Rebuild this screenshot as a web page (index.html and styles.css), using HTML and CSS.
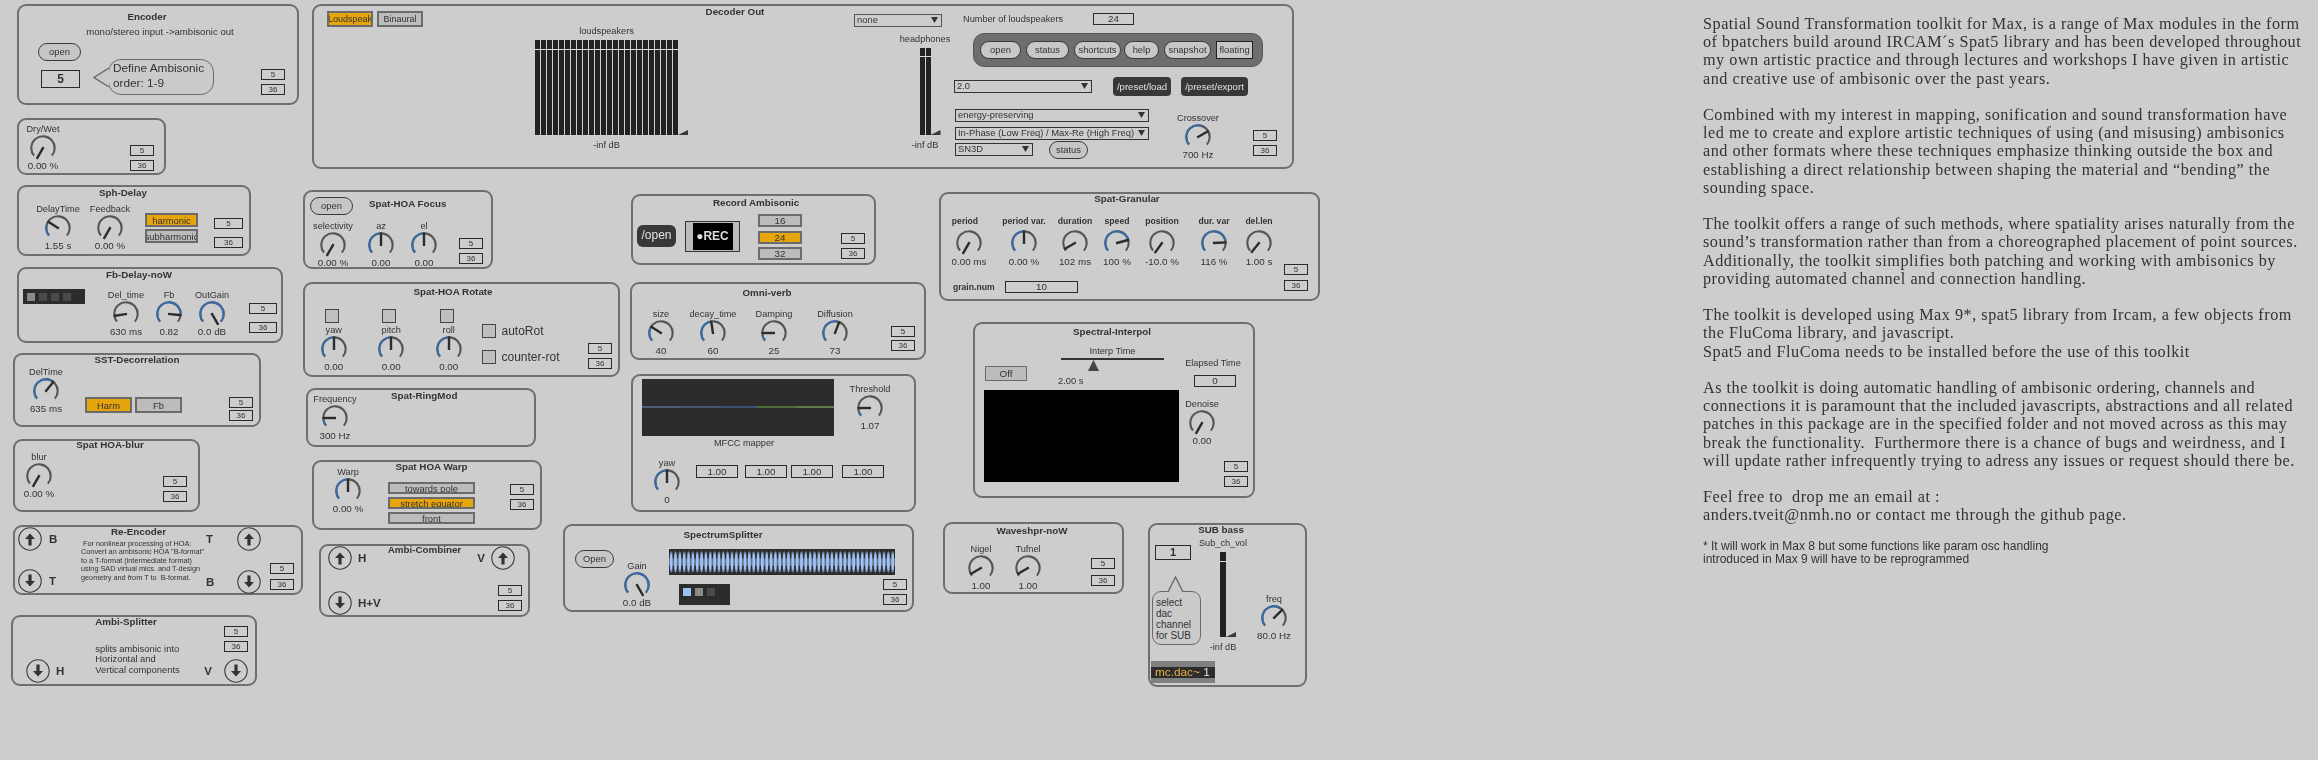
FILE: index.html
```html
<!DOCTYPE html>
<html lang="en">
<head>
    <meta charset="UTF-8">
    <title>Spatial Sound Transformation toolkit</title>
    <link rel="stylesheet" href="styles.css">
</head>
<body>
    <svg class="defs" width="0" height="0">
        <defs>
            <g id="dial">
                <circle class="track" r="11.7" pathLength="360"/>
                <circle class="fill" r="11.7" pathLength="360"/>
                <line class="needle" y1="1" y2="-12.5"/>
            </g>
            <g id="arrow">
                <circle class="ring" r="11.2"/>
                <path class="head" d="M0 -5.5L5 0L1.6 0L1.6 6.5L-1.6 6.5L-1.6 0L-5 0Z"/>
            </g>
        </defs>
    </svg>

    <main class="page">
        <div class="patcher">

            <section class="mod encoder">
                <h3 class="title">Encoder</h3>
                <p class="sub">mono/stereo input -&gt;ambisonic out</p>
                <div class="body">
                    <div class="left">
                        <div class="pill">open</div>
                        <div class="num big">5</div>
                    </div>
                    <div class="callout">Define Ambisonic<br>order: 1-9
                        <svg class="tail" viewBox="0 0 16 19"><path d="M16 0L1 9.5L16 19"/></svg>
                    </div>
                    <div class="chans"><span>5</span><span>36</span></div>
                </div>
            </section>

            <section class="mod drywet">
                <div class="body">
                    <div class="kc"><span class="lbl">Dry/Wet</span><svg class="knob" viewBox="-13 -13 26 26" style="--v:0"><use href="#dial"/></svg><span class="val">0.00 %</span></div>
                    <div class="chans"><span>5</span><span>36</span></div>
                </div>
            </section>

            <section class="mod sphdelay">
                <h3 class="title">Sph-Delay</h3>
                <div class="body">
                    <div class="knobs">
                        <div class="kc"><span class="lbl">DelayTime</span><svg class="knob" viewBox="-13 -13 26 26" style="--v:.31;--b:.2"><use href="#dial"/></svg><span class="val">1.55 s</span></div>
                        <div class="kc"><span class="lbl">Feedback</span><svg class="knob" viewBox="-13 -13 26 26" style="--v:0"><use href="#dial"/></svg><span class="val">0.00 %</span></div>
                    </div>
                    <div class="stack">
                        <div class="tb on">harmonic</div>
                        <div class="tb">subharmonic</div>
                    </div>
                    <div class="chans"><span>5</span><span>36</span></div>
                </div>
            </section>

            <section class="mod fbdelay">
                <h3 class="title">Fb-Delay-noW</h3>
                <div class="body">
                    <div class="tabs"><i class="lit"></i><i></i><i></i><i></i></div>
                    <div class="knobs">
                        <div class="kc"><span class="lbl">Del_time</span><svg class="knob" viewBox="-13 -13 26 26" style="--v:.17;--b:0"><use href="#dial"/></svg><span class="val">630 ms</span></div>
                        <div class="kc"><span class="lbl">Fb</span><svg class="knob" viewBox="-13 -13 26 26" style="--v:.82;--b:.85"><use href="#dial"/></svg><span class="val">0.82</span></div>
                        <div class="kc"><span class="lbl">OutGain</span><svg class="knob" viewBox="-13 -13 26 26" style="--v:1"><use href="#dial"/></svg><span class="val">0.0 dB</span></div>
                    </div>
                    <div class="chans"><span>5</span><span>36</span></div>
                </div>
            </section>

            <section class="mod decorr">
                <h3 class="title">SST-Decorrelation</h3>
                <div class="body">
                    <div class="kc"><span class="lbl">DelTime</span><svg class="knob" viewBox="-13 -13 26 26" style="--v:.63;--b:.6"><use href="#dial"/></svg><span class="val">635 ms</span></div>
                    <div class="pair">
                        <div class="tb on">Harm</div>
                        <div class="tb">Fb</div>
                    </div>
                    <div class="chans"><span>5</span><span>36</span></div>
                </div>
            </section>

            <section class="mod blur">
                <h3 class="title">Spat HOA-blur</h3>
                <div class="body">
                    <div class="kc"><span class="lbl">blur</span><svg class="knob" viewBox="-13 -13 26 26" style="--v:0"><use href="#dial"/></svg><span class="val">0.00 %</span></div>
                    <div class="chans"><span>5</span><span>36</span></div>
                </div>
            </section>

            <section class="mod reenc">
                <div class="body">
                    <div class="arrows">
                        <div class="arow"><svg class="arrow" viewBox="-12 -12 24 24"><use href="#arrow"/></svg><b>B</b></div>
                        <div class="arow"><svg class="arrow down" viewBox="-12 -12 24 24"><use href="#arrow"/></svg><b>T</b></div>
                    </div>
                    <div class="mid">
                        <h3 class="title">Re-Encoder</h3>
                        <p class="tiny">&nbsp;For nonlinear processing of HOA:<br>Convert an ambisonic HOA "B-format"<br>to a T-format (intermediate format)<br>using SAD virtual mics. and T-design<br>geometry and from T to&nbsp; B-format.</p>
                    </div>
                    <div class="arrows right">
                        <div class="arow"><b>T</b><svg class="arrow" viewBox="-12 -12 24 24"><use href="#arrow"/></svg></div>
                        <div class="arow"><b>B</b><svg class="arrow down" viewBox="-12 -12 24 24"><use href="#arrow"/></svg></div>
                    </div>
                    <div class="chans"><span>5</span><span>36</span></div>
                </div>
            </section>

            <section class="mod splitter">
                <h3 class="title">Ambi-Splitter</h3>
                <div class="body">
                    <div class="arow low"><svg class="arrow down" viewBox="-12 -12 24 24"><use href="#arrow"/></svg><b>H</b></div>
                    <p class="txt">splits ambisonic into<br>Horizontal and<br>Vertical components</p>
                    <div class="endcol">
                        <div class="chans"><span>5</span><span>36</span></div>
                        <div class="arow"><b>V</b><svg class="arrow down" viewBox="-12 -12 24 24"><use href="#arrow"/></svg></div>
                    </div>
                </div>
            </section>

            <section class="mod focus">
                <div class="head-row">
                    <div class="pill">open</div>
                    <h3 class="title">Spat-HOA Focus</h3>
                </div>
                <div class="body">
                    <div class="knobs">
                        <div class="kc"><span class="lbl">selectivity</span><svg class="knob" viewBox="-13 -13 26 26" style="--v:0"><use href="#dial"/></svg><span class="val">0.00 %</span></div>
                        <div class="kc"><span class="lbl">az</span><svg class="knob" viewBox="-13 -13 26 26" style="--v:.5"><use href="#dial"/></svg><span class="val">0.00</span></div>
                        <div class="kc"><span class="lbl">el</span><svg class="knob" viewBox="-13 -13 26 26" style="--v:.5"><use href="#dial"/></svg><span class="val">0.00</span></div>
                    </div>
                    <div class="chans"><span>5</span><span>36</span></div>
                </div>
            </section>

            <section class="mod rotate">
                <h3 class="title">Spat-HOA Rotate</h3>
                <div class="body">
                    <div class="knobs">
                        <div class="kc"><i class="check"></i><span class="lbl">yaw</span><svg class="knob" viewBox="-13 -13 26 26" style="--v:.5"><use href="#dial"/></svg><span class="val">0.00</span></div>
                        <div class="kc"><i class="check"></i><span class="lbl">pitch</span><svg class="knob" viewBox="-13 -13 26 26" style="--v:.5"><use href="#dial"/></svg><span class="val">0.00</span></div>
                        <div class="kc"><i class="check"></i><span class="lbl">roll</span><svg class="knob" viewBox="-13 -13 26 26" style="--v:.5"><use href="#dial"/></svg><span class="val">0.00</span></div>
                    </div>
                    <div class="toggles">
                        <div class="toggle"><i class="check"></i>autoRot</div>
                        <div class="toggle"><i class="check"></i>counter-rot</div>
                    </div>
                    <div class="chans"><span>5</span><span>36</span></div>
                </div>
            </section>

            <section class="mod ringmod">
                <div class="body">
                    <div class="kc"><span class="lbl">Frequency</span><svg class="knob" viewBox="-13 -13 26 26" style="--v:.2;--b:.12"><use href="#dial"/></svg><span class="val">300 Hz</span></div>
                    <h3 class="title">Spat-RingMod</h3>
                </div>
            </section>

            <section class="mod warp">
                <div class="body">
                    <div class="kc"><span class="lbl">Warp</span><svg class="knob" viewBox="-13 -13 26 26" style="--v:.5"><use href="#dial"/></svg><span class="val">0.00 %</span></div>
                    <div class="mid">
                        <h3 class="title">Spat HOA Warp</h3>
                        <div class="stack">
                            <div class="tb">towards pole</div>
                            <div class="tb on">stretch equator</div>
                            <div class="tb">front</div>
                        </div>
                    </div>
                    <div class="chans"><span>5</span><span>36</span></div>
                </div>
            </section>

            <section class="mod combiner">
                <div class="body">
                    <div class="arrows">
                        <div class="arow"><svg class="arrow" viewBox="-12 -12 24 24"><use href="#arrow"/></svg><b>H</b></div>
                        <div class="arow"><svg class="arrow down" viewBox="-12 -12 24 24"><use href="#arrow"/></svg><b>H+V</b></div>
                    </div>
                    <h3 class="title">Ambi-Combiner</h3>
                    <div class="endcol">
                        <div class="arow"><b>V</b><svg class="arrow" viewBox="-12 -12 24 24"><use href="#arrow"/></svg></div>
                        <div class="chans"><span>5</span><span>36</span></div>
                    </div>
                </div>
            </section>

            <section class="mod record">
                <h3 class="title">Record Ambisonic</h3>
                <div class="body">
                    <div class="dark">/open</div>
                    <div class="rec"><span>●REC</span></div>
                    <div class="stack">
                        <div class="tb">16</div>
                        <div class="tb on">24</div>
                        <div class="tb">32</div>
                    </div>
                    <div class="chans"><span>5</span><span>36</span></div>
                </div>
            </section>

            <section class="mod omni">
                <h3 class="title">Omni-verb</h3>
                <div class="body">
                    <div class="knobs">
                        <div class="kc"><span class="lbl">size</span><svg class="knob" viewBox="-13 -13 26 26" style="--v:.31;--b:.25"><use href="#dial"/></svg><span class="val">40</span></div>
                        <div class="kc"><span class="lbl">decay_time</span><svg class="knob" viewBox="-13 -13 26 26" style="--v:.47;--b:.45"><use href="#dial"/></svg><span class="val">60</span></div>
                        <div class="kc"><span class="lbl">Damping</span><svg class="knob" viewBox="-13 -13 26 26" style="--v:.2;--b:.12"><use href="#dial"/></svg><span class="val">25</span></div>
                        <div class="kc"><span class="lbl">Diffusion</span><svg class="knob" viewBox="-13 -13 26 26" style="--v:.57;--b:.55"><use href="#dial"/></svg><span class="val">73</span></div>
                    </div>
                    <div class="chans"><span>5</span><span>36</span></div>
                </div>
            </section>

            <section class="mod mfcc">
                <div class="mfcc-top">
                    <div class="mfcc-view">
                        <div class="scope"></div>
                        <span class="lbl">MFCC mapper</span>
                    </div>
                    <div class="kc"><span class="lbl">Threshold</span><svg class="knob" viewBox="-13 -13 26 26" style="--v:.2;--b:.1"><use href="#dial"/></svg><span class="val">1.07</span></div>
                </div>
                <div class="mfcc-low">
                    <div class="kc"><span class="lbl">yaw</span><svg class="knob" viewBox="-13 -13 26 26" style="--v:.5"><use href="#dial"/></svg><span class="val">0</span></div>
                    <div class="num">1.00</div>
                    <div class="num">1.00</div>
                    <div class="num">1.00</div>
                    <div class="num">1.00</div>
                </div>
            </section>

            <section class="mod splitter2">
                <h3 class="title">SpectrumSplitter</h3>
                <div class="body">
                    <div class="pill">Open</div>
                    <div class="kc"><span class="lbl">Gain</span><svg class="knob" viewBox="-13 -13 26 26" style="--v:1"><use href="#dial"/></svg><span class="val">0.0 dB</span></div>
                    <div class="spec-col">
                        <div class="spectrum"></div>
                        <div class="spec-low">
                            <div class="tabs"><i class="blue"></i><i class="lit"></i><i></i></div>
                            <div class="chans"><span>5</span><span>36</span></div>
                        </div>
                    </div>
                </div>
            </section>

            <section class="mod granular">
                <h3 class="title">Spat-Granular</h3>
                <div class="body">
                    <div class="gran-col">
                        <div class="knobs">
                            <div class="kc"><span class="lbl">period</span><svg class="knob" viewBox="-13 -13 26 26" style="--v:0"><use href="#dial"/></svg><span class="val">0.00 ms</span></div>
                            <div class="kc"><span class="lbl">period var.</span><svg class="knob" viewBox="-13 -13 26 26" style="--v:.5"><use href="#dial"/></svg><span class="val">0.00 %</span></div>
                            <div class="kc"><span class="lbl">duration</span><svg class="knob" viewBox="-13 -13 26 26" style="--v:.1;--b:.03"><use href="#dial"/></svg><span class="val">102 ms</span></div>
                            <div class="kc"><span class="lbl">speed</span><svg class="knob" viewBox="-13 -13 26 26" style="--v:.75;--b:.78"><use href="#dial"/></svg><span class="val">100 %</span></div>
                            <div class="kc"><span class="lbl">position</span><svg class="knob" viewBox="-13 -13 26 26" style="--v:.02;--b:0"><use href="#dial"/></svg><span class="val">-10.0 %</span></div>
                            <div class="kc"><span class="lbl">dur. var</span><svg class="knob" viewBox="-13 -13 26 26" style="--v:.79;--b:.8"><use href="#dial"/></svg><span class="val">116 %</span></div>
                            <div class="kc"><span class="lbl">del.len</span><svg class="knob" viewBox="-13 -13 26 26" style="--v:.03;--b:.02"><use href="#dial"/></svg><span class="val">1.00 s</span></div>
                        </div>
                        <div class="grain"><span class="lbl">grain.num</span><div class="num">10</div></div>
                    </div>
                    <div class="chans"><span>5</span><span>36</span></div>
                </div>
            </section>

            <section class="mod interpol">
                <h3 class="title">Spectral-Interpol</h3>
                <div class="body">
                    <div class="si-left">
                        <div class="si-top">
                            <div class="tb">Off</div>
                            <div class="slider">
                                <span class="lbl">Interp Time</span>
                                <div class="rail"></div>
                                <div class="thumb"></div>
                                <span class="lbl time">2.00 s</span>
                            </div>
                        </div>
                        <div class="screen"></div>
                    </div>
                    <div class="si-right">
                        <span class="lbl elapsed">Elapsed Time</span>
                        <div class="num">0</div>
                        <div class="kc"><span class="lbl">Denoise</span><svg class="knob" viewBox="-13 -13 26 26" style="--v:0"><use href="#dial"/></svg><span class="val">0.00</span></div>
                        <div class="chans"><span>5</span><span>36</span></div>
                    </div>
                </div>
            </section>

            <section class="mod waveshpr">
                <h3 class="title">Waveshpr-noW</h3>
                <div class="body">
                    <div class="knobs">
                        <div class="kc"><span class="lbl">Nigel</span><svg class="knob" viewBox="-13 -13 26 26" style="--v:.1;--b:.03"><use href="#dial"/></svg><span class="val">1.00</span></div>
                        <div class="kc"><span class="lbl">Tufnel</span><svg class="knob" viewBox="-13 -13 26 26" style="--v:.1;--b:.03"><use href="#dial"/></svg><span class="val">1.00</span></div>
                    </div>
                    <div class="chans"><span>5</span><span>36</span></div>
                </div>
            </section>

            <section class="mod subbass">
                <h3 class="title">SUB bass</h3>
                <div class="sub-top">
                    <div class="sub-left">
                        <div class="num">1</div>
                        <div class="callout">select<br>dac<br>channel<br>for SUB
                            <svg class="tail" viewBox="0 0 15 16"><path d="M0 16L7.5 1L15 16"/></svg>
                        </div>
                    </div>
                    <div class="meter-col">
                        <span class="lbl">Sub_ch_vol</span>
                        <div class="meter one"></div>
                        <span class="lbl">-inf dB</span>
                    </div>
                    <div class="kc"><span class="lbl">freq</span><svg class="knob" viewBox="-13 -13 26 26" style="--v:.65;--b:.6"><use href="#dial"/></svg><span class="val">80.0 Hz</span></div>
                </div>
                <div class="dac"><span>mc.dac~</span> 1</div>
            </section>

            <section class="mod decoder">
                <div class="body">
                    <div class="pair">
                        <div class="tb on">Loudspeak</div>
                        <div class="tb">Binaural</div>
                    </div>
                    <div class="meter-col speakers">
                        <span class="lbl">loudspeakers</span>
                        <div class="meter wide"></div>
                        <span class="lbl">-inf dB</span>
                    </div>
                    <h3 class="title">Decoder Out</h3>
                    <div class="hp-col">
                        <div class="drop">none</div>
                        <div class="meter-col">
                            <span class="lbl">headphones</span>
                            <div class="meter two"></div>
                            <span class="lbl">-inf dB</span>
                        </div>
                    </div>
                    <div class="ctl-col">
                        <div class="speaker-count"><span class="lbl">Number of loudspeakers</span><div class="num">24</div></div>
                        <div class="toolbar">
                            <div class="pill">open</div>
                            <div class="pill">status</div>
                            <div class="pill">shortcuts</div>
                            <div class="pill">help</div>
                            <div class="pill">snapshot</div>
                            <div class="pill square">floating</div>
                        </div>
                        <div class="preset-row">
                            <div class="drop">2.0</div>
                            <div class="dark">/preset/load</div>
                            <div class="dark">/preset/export</div>
                        </div>
                        <div class="mode-row">
                            <div class="modes">
                                <div class="drop">energy-preserving</div>
                                <div class="drop">In-Phase (Low Freq) / Max-Re (High Freq)</div>
                                <div class="norm"><div class="drop">SN3D</div><div class="pill">status</div></div>
                            </div>
                            <div class="kc"><span class="lbl">Crossover</span><svg class="knob" viewBox="-13 -13 26 26" style="--v:.7;--b:.58"><use href="#dial"/></svg><span class="val">700 Hz</span></div>
                            <div class="chans"><span>5</span><span>36</span></div>
                        </div>
                    </div>
                </div>
            </section>

        </div>

        <article class="notes">
            <p>Spatial Sound Transformation toolkit for Max, is a range of Max modules in the form<br>of bpatchers build around IRCAM´s Spat5 library and has been developed throughout<br>my own artistic practice and through lectures and workshops I have given in artistic<br>and creative use of ambisonic over the past years.</p>
            <p>Combined with my interest in mapping, sonification and sound transformation have<br>led me to create and explore artistic techniques of using (and misusing) ambisonics<br>and other formats where these techniques emphasize thinking outside the box and<br>establishing a direct relationship between shaping the material and “bending” the<br>sounding space.</p>
            <p>The toolkit offers a range of such methods, where spatiality arises naturally from the<br>sound’s transformation rather than from a choreographed placement of point sources.<br>Additionally, the toolkit simplifies both patching and working with ambisonics by<br>providing automated channel and connection handling.</p>
            <p>The toolkit is developed using Max 9*, spat5 library from Ircam, a few objects from<br>the FluComa library, and javascript.<br>Spat5 and FluComa needs to be installed before the use of this toolkit</p>
            <p>As the toolkit is doing automatic handling of ambisonic ordering, channels and<br>connections it is paramount that the included javascripts, abstractions and all related<br>patches in this package are in the specified folder and not moved across as this may<br>break the functionality.&nbsp; Furthermore there is a chance of bugs and weirdness, and I<br>will update rather infrequently trying to adress any issues or request should there be.</p>
            <p>Feel free to&nbsp; drop me an email at :<br>anders.tveit@nmh.no or contact me through the github page.</p>
            <p class="foot">* It will work in Max 8 but some functions like param osc handling<br>introduced in Max 9 will have to be reprogrammed</p>
        </article>
    </main>
</body>
</html>
```

FILE: styles.css
```css
body {
    margin: 0;
    background-color: #cdcdcd;
    color: #333;
    font-family: "Liberation Sans", Arial, sans-serif;
    font-size: 9.2px;
    overflow: hidden;
}

h3, p {
    margin: 0;
}

.defs {
    position: absolute;
}

.page {
    display: flex;
    height: 760px;
    filter: blur(0.35px);
}

.patcher {
    position: relative;
    flex: none;
    width: 1703px;
}

/* right hand text */

.notes {
    padding-top: 15px;
    font-family: "Liberation Serif", Georgia, serif;
    font-size: 16.2px;
    letter-spacing: 0.52px;
    line-height: 18.2px;
    white-space: nowrap;
}

.notes p {
    margin-bottom: 18.2px;
}

.notes .foot {
    margin-top: -3px;
    font-family: "Liberation Sans", Arial, sans-serif;
    font-size: 12px;
    letter-spacing: 0;
    line-height: 13px;
}

/* shared widgets */

.mod {
    position: absolute;
    box-sizing: border-box;
    display: flex;
    flex-direction: column;
    border: 2px solid #6f6f6f;
    border-radius: 9px;
}

.body {
    display: flex;
    flex: 1;
    min-height: 0;
}

.title {
    font-size: 9.8px;
    font-weight: bold;
    line-height: 12px;
    text-align: center;
    white-space: nowrap;
}

.sub {
    font-size: 9.6px;
    line-height: 10px;
    text-align: center;
}

.lbl {
    line-height: 11px;
    white-space: nowrap;
}

.knobs {
    display: flex;
    flex: none;
}

.kc {
    display: flex;
    flex: none;
    flex-direction: column;
    align-items: center;
    width: var(--kw, 40px);
}

.knob {
    display: block;
    width: 26px;
    height: 26px;
}

.val {
    font-size: 9.8px;
    line-height: 9px;
    white-space: nowrap;
}

.track, .fill {
    fill: none;
    stroke-width: 2.1;
    transform: rotate(140deg);
}

.track {
    stroke: #555;
    stroke-dasharray: 260px 100px;
}

.fill {
    stroke: #3a6ba3;
    stroke-dasharray: calc(var(--b, var(--v)) * 260px) 360px;
}

.needle {
    stroke: #2c2c2c;
    stroke-width: 2.4;
    transform: rotate(calc(var(--v) * 300deg - 150deg));
}

.chans {
    display: flex;
    flex: none;
    flex-direction: column;
    gap: var(--cg, 4px);
    margin: auto var(--cr, 8px) var(--cb, 6px) auto;
}

.chans span {
    box-sizing: border-box;
    width: var(--cw, 24px);
    height: 11px;
    border: 1px solid #2a2a2a;
    font-size: 8px;
    line-height: 9px;
    text-align: center;
}

.num {
    box-sizing: border-box;
    border: 1px solid #2a2a2a;
    font-size: 9.8px;
    text-align: center;
}

.pill {
    box-sizing: border-box;
    width: 43px;
    height: 18px;
    border: 1px solid #3a3a3a;
    border-radius: 9px;
    background-color: #c6c6c6;
    font-size: 9.4px;
    line-height: 16px;
    text-align: center;
    white-space: nowrap;
}

.tb {
    box-sizing: border-box;
    display: flex;
    align-items: center;
    justify-content: center;
    overflow: hidden;
    border: 2px solid #6b6b6b;
    background-color: #bcbcbc;
    font-size: 9.4px;
    white-space: nowrap;
}

.tb.on {
    background-color: #e6a50c;
}

.stack, .pair {
    display: flex;
    flex: none;
}

.stack {
    flex-direction: column;
}

.dark {
    flex: none;
    border-radius: 4px;
    background-color: #383838;
    color: #e2e2e2;
    text-align: center;
}

.check {
    display: block;
    flex: none;
    box-sizing: border-box;
    width: 14px;
    height: 14px;
    border: 1.5px solid #444;
    background-color: #bfbfbf;
}

.tabs {
    display: flex;
    flex: none;
    gap: 4px;
    box-sizing: border-box;
    padding: 4px;
    background-color: #2c2c2c;
}

.tabs i {
    width: 8px;
    height: 8px;
    background-color: #4a4a4a;
}

.tabs .lit {
    background-color: #8a8a8a;
}

.tabs .blue {
    background-color: #9dc0f3;
}

.arrow {
    display: block;
    flex: none;
    width: 24px;
    height: 24px;
}

.arrow.down {
    transform: rotate(180deg);
}

.ring {
    fill: none;
    stroke: #3a3a3a;
    stroke-width: 1.1;
}

.head {
    fill: #333;
}

.arow {
    display: flex;
    flex: none;
    align-items: center;
}

.arow b {
    font-size: 11.5px;
    line-height: 14px;
}

.arrows {
    display: flex;
    flex: none;
    flex-direction: column;
}

.callout {
    position: relative;
    flex: none;
    box-sizing: border-box;
    border: 1.5px solid #6a6a6a;
    border-radius: 13px;
    background-color: #cacaca;
    white-space: nowrap;
}

.tail {
    position: absolute;
    fill: #cacaca;
    stroke: #6a6a6a;
    stroke-width: 1.4;
}

.drop {
    position: relative;
    box-sizing: border-box;
    height: 13px;
    padding-left: 2px;
    border: 1.5px solid #333;
    font-size: 9.4px;
    line-height: 10px;
    white-space: nowrap;
}

.drop::after {
    content: "";
    position: absolute;
    right: 3px;
    top: 2px;
    width: 7px;
    height: 6px;
    background-color: #333;
    clip-path: polygon(0 0, 100% 0, 50% 100%);
}

.meter-col {
    display: flex;
    flex: none;
    flex-direction: column;
    align-items: center;
    width: 50px;
}

.meter {
    position: relative;
    flex: none;
    margin: 3px 0 5px;
}

.meter::after {
    content: "";
    position: absolute;
    right: -10px;
    bottom: 0;
    width: 10px;
    height: 5px;
    background-color: #3a3a3a;
    clip-path: polygon(0 100%, 100% 0, 100% 100%);
}

/* Encoder */

.encoder {
    left: 17px;
    top: 4px;
    width: 282px;
    height: 101px;
    --cr: 12px;
    --cb: 8px;
}

.encoder .title {
    margin-top: 5px;
    padding-right: 22px;
}

.encoder .sub {
    margin-top: 4px;
    padding-left: 4px;
}

.encoder .left {
    margin-left: 19px;
}

.encoder .pill {
    margin-top: 6px;
}

.encoder .big {
    width: 39px;
    height: 18px;
    margin: 9px 0 0 3px;
    font-size: 12px;
    font-weight: bold;
    line-height: 16px;
}

.encoder .callout {
    width: 106px;
    height: 36px;
    margin: 22px 0 0 27px;
    padding: 1px 0 0 4px;
    font-size: 11.8px;
    line-height: 14.5px;
}

.encoder .tail {
    left: -16px;
    top: 8px;
    width: 16px;
    height: 19px;
}

/* Dry/Wet */

.drywet {
    left: 17px;
    top: 118px;
    width: 149px;
    height: 57px;
    --cr: 10px;
    --cb: 2px;
}

.drywet .kc {
    margin: 4px 0 0 4px;
}

/* Sph-Delay */

.sphdelay {
    left: 17px;
    top: 185px;
    width: 234px;
    height: 71px;
    --cw: 29px;
    --cg: 8px;
    --cr: 6px;
    --cb: 6px;
}

.sphdelay .title {
    padding-right: 22px;
}

.sphdelay .knobs {
    margin: 5px 0 0 13px;
    --kw: 52px;
}

.sphdelay .stack {
    gap: 2px;
    margin: 14px 0 0 9px;
}

.sphdelay .tb {
    width: 53px;
    height: 14px;
}

/* Fb-Delay */

.fbdelay {
    left: 17px;
    top: 267px;
    width: 266px;
    height: 76px;
    --cw: 28px;
    --cg: 8px;
    --cr: 4px;
    --cb: 8px;
}

.fbdelay .title {
    padding-right: 22px;
}

.fbdelay .tabs {
    width: 62px;
    height: 15px;
    margin: 8px 0 0 4px;
}

.fbdelay .knobs {
    margin: 9px 0 0 19.5px;
    --kw: 43px;
}

/* Decorrelation */

.decorr {
    left: 13px;
    top: 353px;
    width: 248px;
    height: 74px;
    --cg: 2px;
    --cr: 6px;
    --cb: 4px;
}

.decorr .title {
    margin-top: -1px;
}

.decorr .kc {
    margin: 1px 0 0 11px;
}

.decorr .pair {
    gap: 3px;
    margin: 31px 0 0 19px;
}

.decorr .tb {
    width: 47px;
    height: 16px;
}

/* Blur */

.blur {
    left: 13px;
    top: 439px;
    width: 187px;
    height: 73px;
    --cr: 11px;
    --cb: 8px;
}

.blur .title {
    margin-top: -2px;
    padding-left: 7px;
}

.blur .kc {
    margin: 1px 0 0 4px;
}

/* Re-Encoder */

.reenc {
    left: 13px;
    top: 525px;
    width: 290px;
    height: 70px;
    --cg: 5px;
    --cr: 7px;
    --cb: 3px;
}

.reenc .arrows {
    gap: 18px;
    margin: 0 0 0 3px;
}

.reenc .arow b {
    width: 10px;
    margin-left: 7px;
}

.reenc .mid {
    flex: none;
    width: 123px;
    margin-left: 22px;
}

.reenc .title {
    margin-top: -1px;
    padding-right: 8px;
}

.tiny {
    margin-top: 1.75px;
    font-size: 7.3px;
    line-height: 8.5px;
    white-space: nowrap;
}

.reenc .right {
    margin-left: 2px;
    gap: 19px;
}

.reenc .right .arow b {
    margin: 0 21px 0 0;
}

/* Ambi-Splitter */

.splitter {
    left: 11px;
    top: 615px;
    width: 246px;
    height: 71px;
}

.splitter .title {
    margin-top: -1px;
    padding-right: 16px;
}

.splitter .low {
    margin: 31px 0 0 13px;
    align-self: flex-start;
}

.splitter .low b {
    margin-left: 6px;
}

.txt {
    flex: none;
    font-size: 9.4px;
    line-height: 10.7px;
    white-space: nowrap;
}

.splitter .txt {
    margin: 15.7px 0 0 31px;
}

.endcol {
    display: flex;
    flex: none;
    flex-direction: column;
    align-items: flex-end;
    margin-left: auto;
}

.splitter .chans {
    margin: -2px 7px 0 0;
}

.splitter .endcol .arow {
    margin: 7px 7px 0 0;
}

.splitter .endcol b {
    margin-right: 12px;
}

/* Spat-HOA Focus */

.focus {
    left: 303px;
    top: 190px;
    width: 190px;
    height: 79px;
    --cr: 8px;
    --cb: 3px;
}

.head-row {
    display: flex;
    flex: none;
    height: 23px;
}

.focus .pill {
    margin: 5px 0 0 5px;
}

.focus .title {
    margin: 6px 0 0 16px;
}

.focus .knobs {
    margin: 6px 0 0 4px;
}

.focus .kc {
    width: 48px;
}

.focus .kc:last-child {
    width: 38px;
}

/* Spat-HOA Rotate */

.rotate {
    left: 303px;
    top: 282px;
    width: 317px;
    height: 95px;
    --cr: 6px;
    --cb: 6px;
}

.rotate .title {
    margin-top: 2px;
    padding-right: 17px;
}

.rotate .knobs {
    margin-top: 11px;
    --kw: 57.5px;
}

.rotate .kc .check {
    margin: 0 4px 2px 0;
}

.toggles {
    display: flex;
    flex: none;
    flex-direction: column;
    gap: 12px;
    margin: 26px 0 0 4px;
}

.toggle {
    display: flex;
    align-items: center;
    gap: 6px;
    font-size: 12px;
    line-height: 13px;
}

/* Spat-RingMod */

.ringmod {
    left: 306px;
    top: 388px;
    width: 230px;
    height: 59px;
}

.ringmod .kc {
    width: 50px;
    margin: 4px 0 0 2px;
}

.ringmod .title {
    margin-left: 31px;
}

/* Spat HOA Warp */

.warp {
    left: 312px;
    top: 460px;
    width: 230px;
    height: 70px;
    --cr: 6px;
    --cb: 18px;
}

.warp .kc {
    margin: 5px 0 0 14px;
}

.warp .mid {
    flex: none;
    width: 87px;
    margin-left: 20px;
}

.warp .title {
    margin-top: -1px;
}

.warp .stack {
    gap: 3px;
    margin-top: 9px;
}

.warp .tb {
    height: 12px;
}

/* Ambi-Combiner */

.combiner {
    left: 319px;
    top: 544px;
    width: 211px;
    height: 73px;
}

.combiner .arrows {
    gap: 21px;
    margin-left: 7px;
}

.combiner .arow b {
    margin-left: 6px;
}

.combiner .title {
    margin: -2px 0 0 7px;
}

.combiner .endcol .arow {
    margin-right: 13px;
}

.combiner .endcol b {
    margin: 0 6px 0 0;
}

.combiner .chans {
    margin: 15px 6px 0 0;
}

/* Record Ambisonic */

.record {
    left: 631px;
    top: 194px;
    width: 245px;
    height: 71px;
    --cr: 9px;
    --cb: 4px;
}

.record .title {
    margin-top: 1px;
    padding-left: 5px;
}

.record .dark {
    width: 39px;
    height: 22px;
    margin: 16px 0 0 4px;
    border-radius: 6px;
    font-size: 12px;
    line-height: 21px;
}

.rec {
    display: flex;
    flex: none;
    justify-content: center;
    box-sizing: border-box;
    width: 55px;
    height: 31px;
    margin: 12px 0 0 9px;
    padding-top: 1px;
    border: 1px solid #333;
    background-color: #bcbcbc;
}

.rec span {
    width: 40px;
    height: 27px;
    background-color: #000;
    color: #ddd;
    font-size: 12px;
    font-weight: bold;
    line-height: 26px;
    text-align: center;
}

.record .stack {
    gap: 3.5px;
    margin: 5px 0 0 18px;
}

.record .tb {
    width: 44px;
    height: 13px;
    font-size: 9.8px;
}

/* Omni-verb */

.omni {
    left: 630px;
    top: 282px;
    width: 296px;
    height: 78px;
    --cg: 3px;
    --cr: 9px;
    --cb: 7px;
}

.omni .title {
    margin-top: 3px;
    padding-right: 22px;
}

.omni .knobs {
    margin: 10px 0 0 3px;
    --kw: 52px;
}

.omni .kc:nth-child(3) {
    width: 70px;
}

/* MFCC */

.mfcc {
    left: 631px;
    top: 374px;
    width: 285px;
    height: 138px;
}

.mfcc-top, .mfcc-low {
    display: flex;
    flex: none;
}

.mfcc-view {
    display: flex;
    flex: none;
    flex-direction: column;
    align-items: center;
    margin: 3px 0 0 9px;
}

.scope {
    width: 192px;
    height: 57px;
    margin-bottom: 2px;
    background: linear-gradient(90deg, #4c5c79 0 20%, #47556f 20% 40%, #3e5071 40% 60%, #4e6b3b 60% 80%, #5d7b46 80%) no-repeat 0 27px / 100% 2px, #2c2c2c;
}

.mfcc-view .lbl {
    padding-left: 12px;
}

.mfcc-top .kc {
    width: 50px;
    margin: 8px 0 0 11px;
}

.mfcc-low {
    margin-top: 9px;
}

.mfcc-low .kc {
    margin-left: 14px;
}

.mfcc-low .num {
    flex: none;
    width: 42px;
    height: 13px;
    margin: 7px 0 0 7px;
    font-size: 9.8px;
    line-height: 11px;
}

.mfcc-low .kc + .num {
    margin-left: 9px;
}

.mfcc-low .num:nth-child(4) {
    margin-left: 4px;
}

.mfcc-low .num:nth-child(5) {
    margin-left: 9px;
}

/* SpectrumSplitter */

.splitter2 {
    left: 563px;
    top: 524px;
    width: 351px;
    height: 88px;
}

.splitter2 .title {
    margin-top: 3px;
    padding-right: 31px;
}

.splitter2 .pill {
    flex: none;
    width: 39px;
    margin: 9px 0 0 10px;
}

.splitter2 .kc {
    margin: 20px 0 0 3px;
}

.spec-col {
    flex: none;
    width: 238px;
    margin: 8px 0 0 12px;
}

.spectrum {
    width: 226px;
    height: 26px;
    background: radial-gradient(ellipse 1.9px 11px, #a0c2f4 70%, rgba(160, 194, 244, 0.3) 100%, transparent) repeat-x 0 0 / 4.35px 100%, #2c2c2c;
}

.spec-low {
    display: flex;
    margin-top: 9px;
}

.spec-low .tabs {
    width: 51px;
    height: 21px;
    margin-left: 10px;
}

.spec-low .chans {
    margin: -5px 0 0 auto;
}

/* Spat-Granular */

.granular {
    left: 939px;
    top: 192px;
    width: 381px;
    height: 109px;
    --cg: 5px;
    --cr: 10px;
    --cb: 8px;
}

.granular .title {
    margin-top: -1px;
    padding-right: 5px;
}

.granular .knobs {
    margin: 11px 0 0 5px;
}

.granular .lbl {
    margin-bottom: 3px;
    font-size: 8.6px;
    font-weight: bold;
}

.granular .val {
    margin-top: 1px;
}

.granular .kc:nth-child(1) {
    width: 46px;
}

.granular .kc:nth-child(1) .lbl {
    margin-right: 8px;
}

.granular .kc:nth-child(2) {
    width: 64px;
}

.granular .kc:nth-child(3) {
    width: 38px;
}

.granular .kc:nth-child(4) {
    width: 46px;
}

.granular .kc:nth-child(5) {
    width: 44px;
}

.granular .kc:nth-child(6) {
    width: 60px;
}

.granular .kc:nth-child(7) {
    width: 30px;
}

.grain {
    display: flex;
    align-items: center;
    margin: 15px 0 0 12px;
}

.grain .lbl {
    width: 52px;
    margin: 0;
}

.grain .num {
    width: 73px;
    height: 12px;
    line-height: 10px;
}

/* Spectral-Interpol */

.interpol {
    left: 973px;
    top: 322px;
    width: 282px;
    height: 176px;
    --cr: 5px;
    --cb: 9px;
}

.interpol .title {
    margin-top: 2px;
    padding-right: 4px;
}

.si-left {
    flex: none;
    width: 195px;
    margin-left: 9px;
}

.si-top {
    display: flex;
    height: 52px;
}

.si-top .tb {
    flex: none;
    width: 42px;
    height: 15px;
    margin: 28px 0 0 1px;
    border-width: 1.5px;
    font-size: 9.8px;
}

.slider {
    display: flex;
    flex: none;
    flex-direction: column;
    width: 103px;
    margin: 8px 0 0 34px;
}

.slider > .lbl:first-child {
    text-align: center;
}

.rail {
    height: 2px;
    margin-top: 1px;
    background-color: #333;
}

.thumb {
    width: 11px;
    height: 11px;
    margin: 0 0 0 27px;
    background-color: #444;
    clip-path: polygon(50% 0, 100% 100%, 0 100%);
}

.slider .time {
    margin: 4px 0 0 -3px;
    font-size: 9.4px;
}

.screen {
    width: 195px;
    height: 92px;
    background-color: #000;
}

.si-right {
    display: flex;
    flex: 1;
    flex-direction: column;
    min-width: 0;
}

.elapsed {
    width: 68px;
    margin-top: 20px;
    text-align: center;
}

.si-right .num {
    width: 42px;
    height: 12px;
    margin: 6px 0 0 15px;
    line-height: 10px;
}

.si-right .kc {
    width: 46px;
    margin-top: 12px;
}

/* Waveshpr */

.waveshpr {
    left: 943px;
    top: 522px;
    width: 181px;
    height: 72px;
    --cg: 6px;
    --cr: 7px;
    --cb: 6px;
}

.waveshpr .title {
    margin-top: 1px;
    padding-right: 3px;
}

.waveshpr .knobs {
    margin: 7px 0 0 12.5px;
    --kw: 47px;
}

/* SUB bass */

.subbass {
    left: 1148px;
    top: 523px;
    width: 159px;
    height: 164px;
}

.subbass .title {
    margin-top: -1px;
    padding-right: 13px;
}

.sub-top {
    display: flex;
    flex: none;
    height: 115px;
}

.sub-left {
    flex: none;
    width: 47px;
    margin-left: 1px;
}

.sub-left .num {
    width: 36px;
    height: 15px;
    margin: 9px 0 0 4px;
    font-size: 11px;
    font-weight: bold;
    line-height: 13px;
}

.sub-left .callout {
    width: 49px;
    height: 54px;
    margin: 31px 0 0 1px;
    padding: 5px 0 0 3px;
    border-radius: 9px;
    font-size: 10px;
    line-height: 11px;
}

.sub-left .tail {
    left: 15px;
    top: -16px;
    width: 15px;
    height: 16px;
}

.subbass .meter-col {
    margin-top: 2px;
}

.meter.one {
    width: 6px;
    height: 85px;
    background: linear-gradient(#ddd, #ddd) no-repeat 0 9px / 100% 1px, #222;
}

.subbass .kc {
    width: 46px;
    margin: 58px 0 0 3px;
}

.dac {
    flex: none;
    width: 64px;
    height: 22px;
    margin: 10px 0 0 1px;
    padding-left: 4px;
    box-sizing: border-box;
    background: linear-gradient(#808080 0 6px, #2c2c2c 6px 17px, #808080 17px);
    color: #e4e4e4;
    font-size: 11.8px;
    line-height: 22px;
    white-space: nowrap;
}

.dac span {
    color: #e9b24c;
}

/* Decoder Out */

.decoder {
    left: 312px;
    top: 4px;
    width: 982px;
    height: 165px;
}

.decoder .pair {
    gap: 4px;
    margin: 5px 0 0 13px;
    align-self: flex-start;
}

.decoder .pair .tb {
    width: 46px;
    height: 16px;
    font-size: 9px;
}

.speakers {
    width: 143px;
    margin: 20px 0 0 112px;
}

.meter.wide {
    width: 143px;
    height: 95px;
    background: linear-gradient(#ddd, #ddd) no-repeat 0 9px / 100% 1px, repeating-linear-gradient(90deg, #222 0 5px, #cdcdcd 5px 6px);
}

.decoder .title {
    flex: none;
    width: 60px;
    margin-left: 27px;
}

.hp-col {
    flex: none;
    width: 96px;
    margin-left: 89px;
}

.hp-col .drop {
    width: 88px;
    margin-top: 8px;
    border-color: #555;
}

.hp-col .meter-col {
    margin: 7px 0 0 46px;
}

.meter.two {
    width: 11px;
    height: 87px;
    background: linear-gradient(#ddd, #ddd) no-repeat 0 8px / 100% 1px, linear-gradient(90deg, #222 0 5px, #cdcdcd 5px 6px, #222 6px);
}

.ctl-col {
    flex: none;
    width: 326px;
    margin-left: 4px;
}

.speaker-count {
    display: flex;
    align-items: center;
    margin: 7px 0 0 9px;
}

.speaker-count .lbl {
    width: 130px;
}

.speaker-count .num {
    width: 41px;
    height: 12px;
    line-height: 10px;
}

.toolbar {
    display: grid;
    grid-template-columns: 46px 48px 50px 40px 52px 37px;
    align-items: center;
    box-sizing: border-box;
    width: 290px;
    height: 34px;
    margin: 8px 0 0 19px;
    padding-left: 6px;
    border: 1.5px solid #585858;
    border-radius: 11px;
    background-color: #6e6e6e;
}

.toolbar .pill {
    background-color: #c8c8c8;
}

.toolbar .pill:nth-child(1) {
    width: 41px;
}

.toolbar .pill:nth-child(3) {
    width: 47px;
}

.toolbar .pill:nth-child(4) {
    width: 35px;
}

.toolbar .pill:nth-child(5) {
    width: 47px;
}

.toolbar .square {
    width: 37px;
    border-radius: 0;
    border-color: #222;
}

.preset-row {
    display: flex;
    align-items: center;
    height: 19px;
    margin-top: 10px;
}

.preset-row .drop {
    flex: none;
    width: 138px;
}

.preset-row .dark {
    width: 58px;
    height: 19px;
    margin-left: 21px;
    font-size: 9.6px;
    line-height: 19px;
}

.preset-row .dark:last-child {
    width: 67px;
    margin-left: 10px;
}

.mode-row {
    display: flex;
}

.modes {
    display: flex;
    flex: none;
    flex-direction: column;
    gap: 5px;
    width: 194px;
    margin: 13px 0 0 1px;
}

.norm {
    display: flex;
    margin-top: -4px;
}

.norm .drop {
    flex: none;
    width: 78px;
    margin-top: 2px;
}

.norm .pill {
    width: 39px;
    margin-left: 16px;
}

.mode-row .kc {
    width: 50px;
    margin: 17px 0 0 24px;
}

.mode-row .chans {
    margin: 34px 0 0 30px;
}
```
